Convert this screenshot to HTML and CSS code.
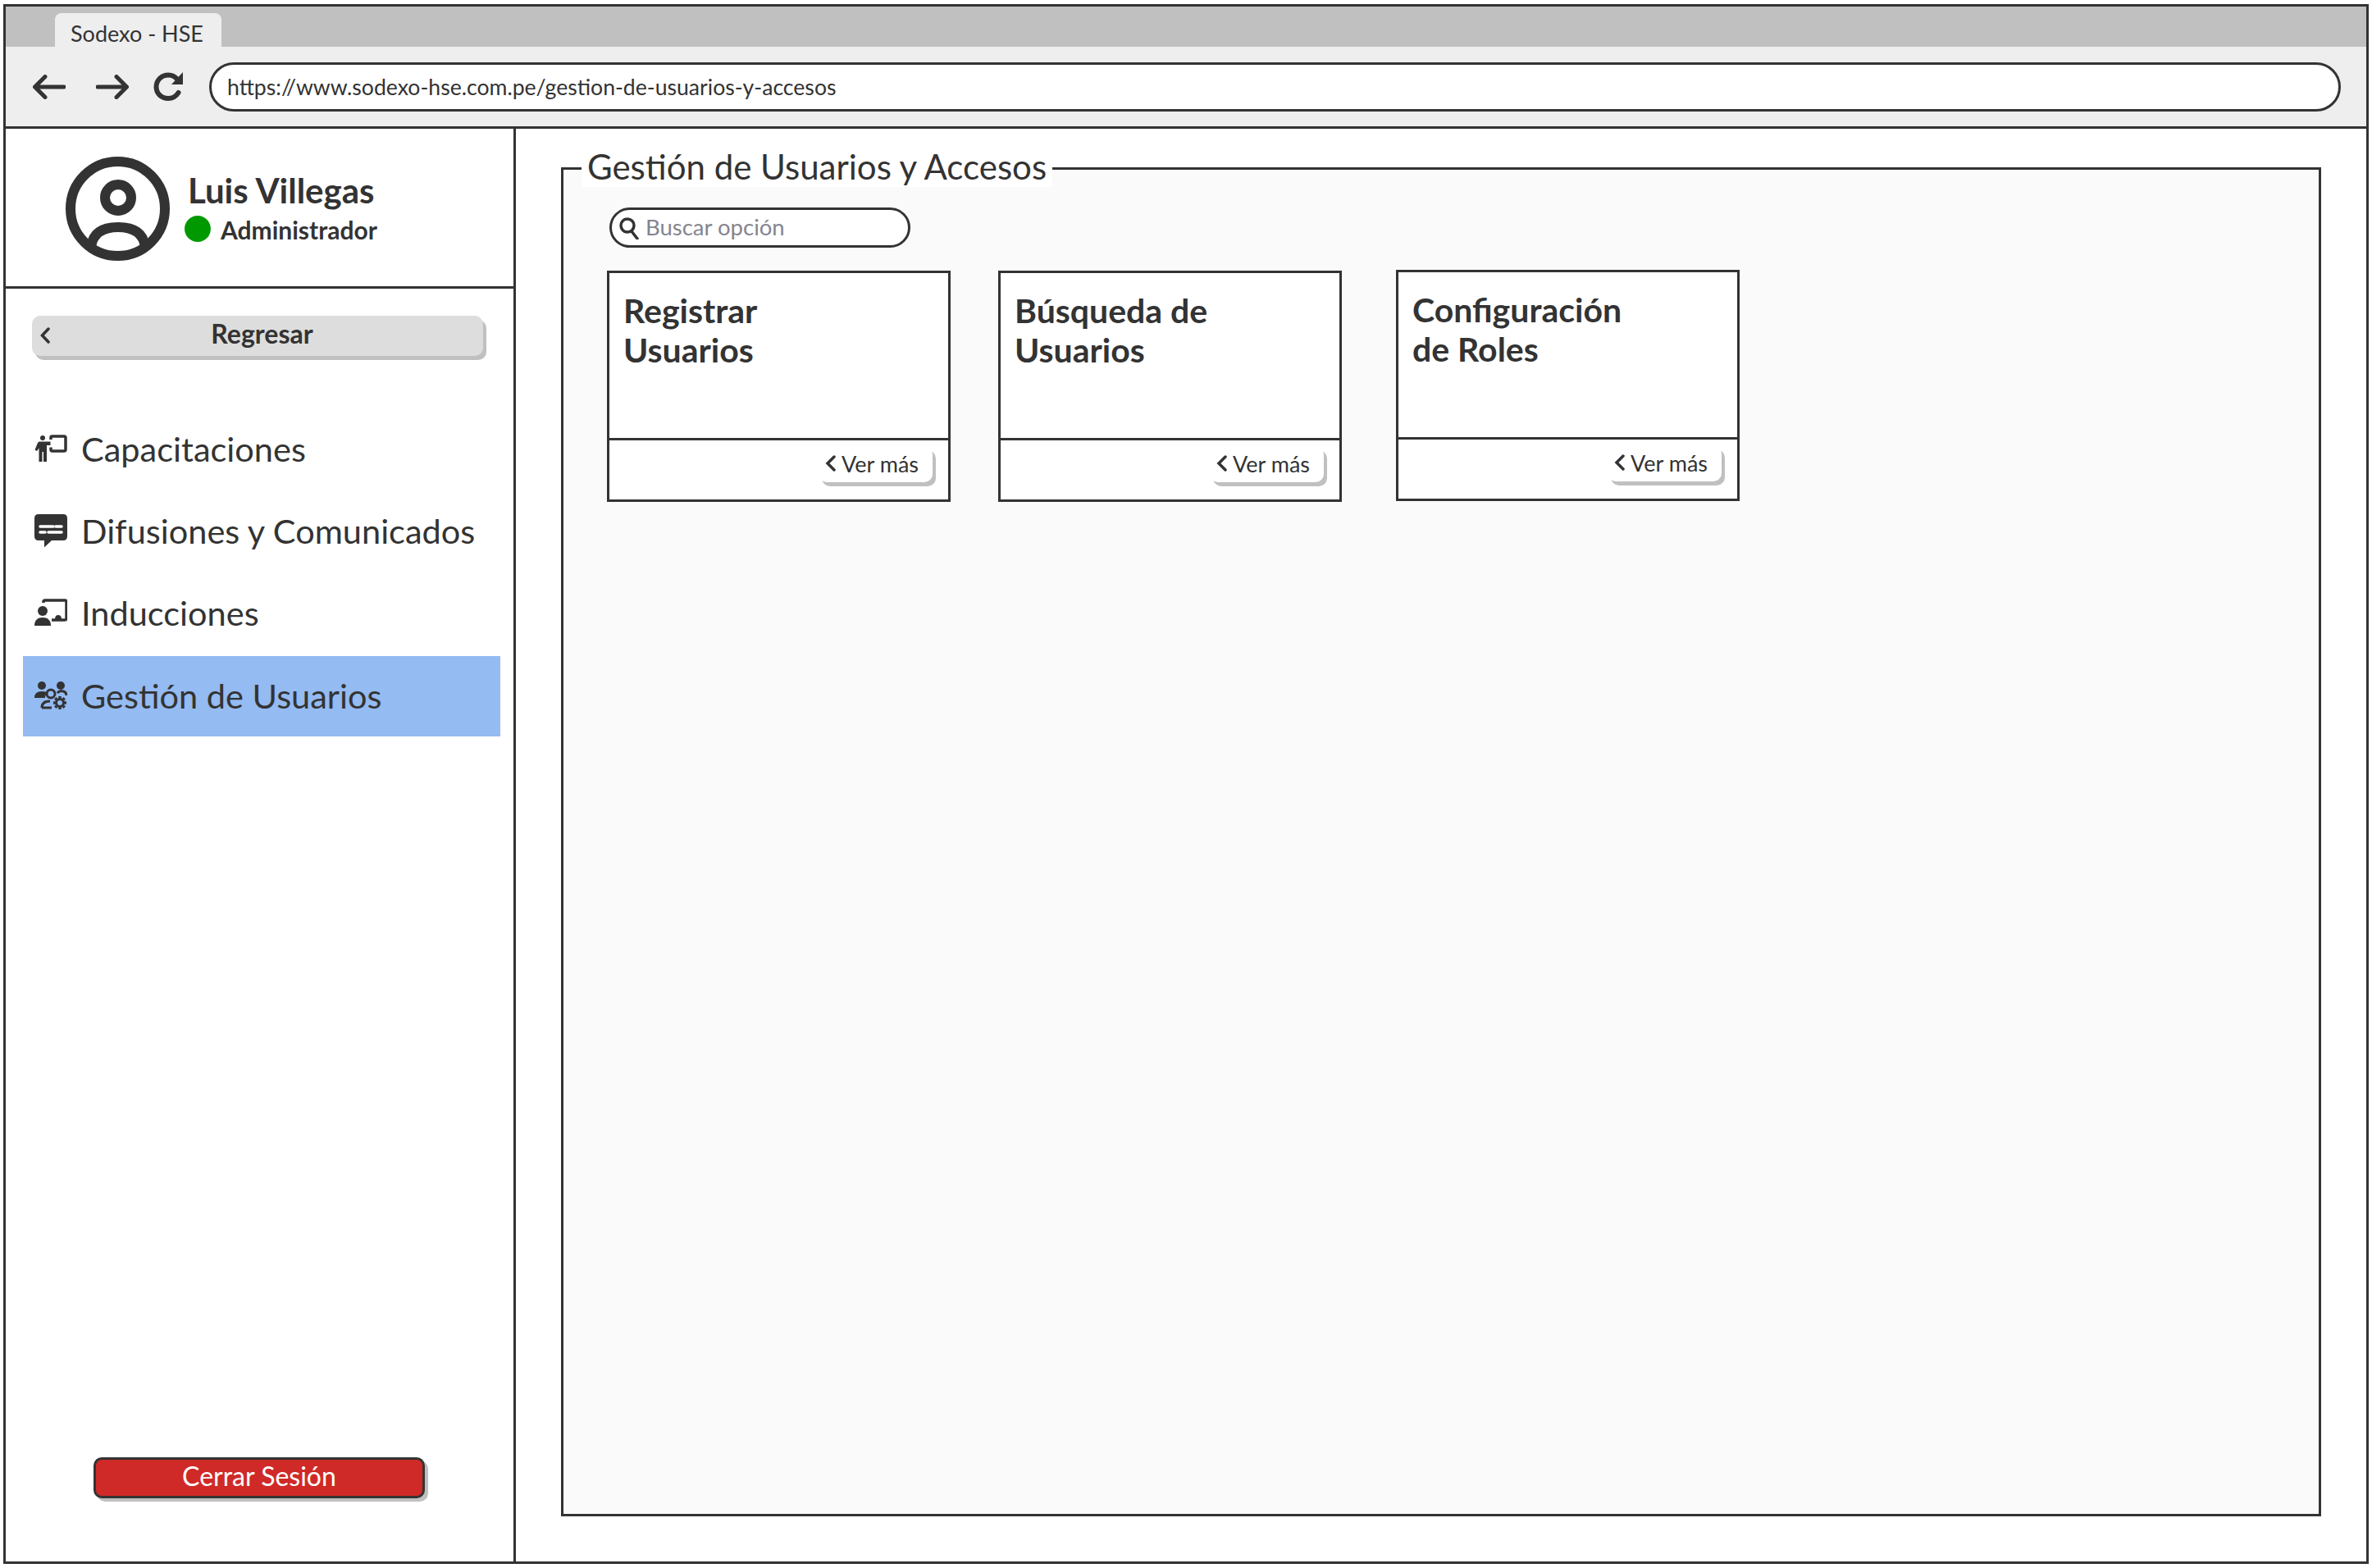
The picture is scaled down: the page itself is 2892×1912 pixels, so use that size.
FILE: index.html
```html
<!DOCTYPE html>
<html lang="es">
<head>
    <meta charset="UTF-8">
    <title>Sodexo - HSE</title>
    <link rel="stylesheet" href="styles.css">
</head>
<body>

<div class="window">
    <div class="tabbar">
        <div class="tab">Sodexo - HSE</div>
    </div>

    <div class="toolbar">
        <svg class="nav-icon" width="40" height="30" viewBox="0 0 40 30"><path d="M38 15H3M15 2.500L2.500 15 15 27.500"/></svg>
        <svg class="nav-icon" width="40" height="30" viewBox="0 0 40 30"><path d="M2 15H37M25 2.500L37.500 15 25 27.500"/></svg>
        <svg class="reload-icon" width="37" height="35" viewBox="0 0 37 35"><path class="reload-arc" d="M29 8.500C26 5 22.500 3.500 18.500 3.500 10 3.500 3.500 9.500 3.500 18 3.500 26 10 32 18 32 24 32 28 29 30.500 25"/><path class="reload-tip" d="M36 0V15H22Z"/></svg>
        <div class="url">https://www.sodexo-hse.com.pe/gestion-de-usuarios-y-accesos</div>
    </div>

    <div class="app">
        <aside class="sidebar">
            <div class="profile">
                <svg class="avatar" width="127" height="127" viewBox="0 0 127 127">
                    <circle cx="63.500" cy="63.500" r="57.500"/>
                    <circle cx="64" cy="50" r="16"/>
                    <path d="M31 110C33 94 44 86 64 86S95 94 97 110"/>
                </svg>
                <div class="profile-text">
                    <div class="profile-name">Luis Villegas</div>
                    <div class="profile-role"><span class="status-dot"></span>Administrador</div>
                </div>
            </div>

            <div class="back-btn">
                <svg class="back-chevron" width="12" height="20" viewBox="0 0 12 20"><path d="M10 2L2.500 10 10 18"/></svg>
                Regresar
            </div>

            <nav class="menu">
                <div class="menu-item">
                    <svg class="menu-icon" width="40" height="34" viewBox="0 0 40 34">
                        <circle cx="10" cy="4" r="3"/>
                        <path d="M6 8.500H19.500V13H15V33H11V21H9.500V33H5.500V16.500L3 20 .5 18.500 4 10Q4.800 8.500 6 8.500Z"/>
                        <path class="line" d="M20 6V3.500Q20 2 21.500 2H36Q38 2 38 4V18Q38 20 36 20H21.500Q20 20 20 18V15.500"/>
                    </svg>
                    Capacitaciones
                </div>
                <div class="menu-item">
                    <svg class="menu-icon" width="40" height="41" viewBox="0 0 40 41">
                        <path d="M5 0H35Q40 0 40 5V27Q40 32 35 32H21L12 40.500V32H5Q0 32 0 27V5Q0 0 5 0Z"/>
                        <path class="slot" d="M7 15H23M26 15H33M7 22H13M17 22H33"/>
                    </svg>
                    Difusiones y Comunicados
                </div>
                <div class="menu-item">
                    <svg class="menu-icon" width="40" height="34" viewBox="0 0 40 34">
                        <circle cx="10" cy="15" r="6"/>
                        <path d="M0 33C0 26 4 23 10 23S20 26 20 33Z"/>
                        <path class="line" d="M11 5V4Q11 2 13 2H37Q39 2 39 4V24Q39 26 37 26H21"/>
                        <path d="M25 25Q25 20 29 20T33 25Z"/>
                    </svg>
                    Inducciones
                </div>
                <div class="menu-item menu-item-active">
                    <svg class="menu-icon" width="40" height="34" viewBox="0 0 40 34">
                        <circle cx="9" cy="5" r="5"/>
                        <circle cx="32" cy="5" r="5"/>
                        <path d="M0 20Q0 12 9 12 14 12 16 14 13 16 13 20Z"/>
                        <circle class="ring" cx="20" cy="15" r="5"/>
                        <path class="ring" d="M9 32H21M9 32C9 26 13 24 19 24"/>
                        <path class="ring" d="M28 14Q30 11.500 33 11.500 39 12 39 17"/>
                        <circle class="ring" cx="31" cy="26" r="4.500"/>
                        <path class="gear" d="M31 18V20.500M31 31.500V34M23 26H25.500M36.500 26H39M25.300 20.300L27 22M35 30L36.700 31.700M25.300 31.700L27 30M35 22L36.700 20.300"/>
                    </svg>
                    Gestión de Usuarios
                </div>
            </nav>

            <div class="logout-btn">Cerrar Sesión</div>
        </aside>

        <main class="content">
            <section class="panel">
                <h1 class="panel-title">Gestión de Usuarios y Accesos</h1>

                <div class="search">
                    <svg class="search-icon" width="24" height="28" viewBox="0 0 24 28"><circle cx="10" cy="11" r="8"/><path d="M15 18L22 27"/></svg>
                    <span>Buscar opción</span>
                </div>

                <div class="cards">
                    <div class="card">
                        <div class="card-body">Registrar<br>Usuarios</div>
                        <div class="card-foot">
                            <div class="more-btn"><svg class="more-chevron" width="13" height="20" viewBox="0 0 13 20"><path d="M11 2L3 10 11 18"/></svg>Ver más</div>
                        </div>
                    </div>
                    <div class="card">
                        <div class="card-body">Búsqueda de<br>Usuarios</div>
                        <div class="card-foot">
                            <div class="more-btn"><svg class="more-chevron" width="13" height="20" viewBox="0 0 13 20"><path d="M11 2L3 10 11 18"/></svg>Ver más</div>
                        </div>
                    </div>
                    <div class="card card-roles">
                        <div class="card-body">Configuración<br>de Roles</div>
                        <div class="card-foot">
                            <div class="more-btn"><svg class="more-chevron" width="13" height="20" viewBox="0 0 13 20"><path d="M11 2L3 10 11 18"/></svg>Ver más</div>
                        </div>
                    </div>
                </div>
            </section>
        </main>
    </div>
</div>

</body>
</html>
```

FILE: styles.css
```css
* {
    box-sizing: border-box;
}
body {
    margin: 0;
    background: #fff;
    color: #333;
    font-family: Lato, "Open Sans", sans-serif;
}

/* browser frame */
.window {
    width: 2884px;
    height: 1902px;
    margin: 5px 4px;
    border: 3px solid #333;
    display: flex;
    flex-direction: column;
}
.tabbar {
    height: 49px;
    flex: none;
    padding: 8px 0 0 60px;
    background: #c0c0c0;
}
.tab {
    width: 203px;
    height: 41px;
    padding: 8px 0 0 19px;
    background: #eee;
    border-radius: 8px 8px 0 0;
    font-size: 27px;
    line-height: 34px;
    white-space: nowrap;
}
.toolbar {
    height: 100px;
    flex: none;
    display: flex;
    align-items: center;
    padding: 0 31px 0 33px;
    background: #eee;
    border-bottom: 3px solid #333;
}
.nav-icon {
    margin-right: 37px;
    fill: none;
    stroke: #333;
    stroke-width: 5;
    stroke-linecap: round;
    stroke-linejoin: round;
}
.reload-icon {
    margin: 0 31px 0 -7px;
}
.reload-arc {
    fill: none;
    stroke: #333;
    stroke-width: 6;
    stroke-linecap: round;
}
.reload-tip {
    fill: #333;
}
.url {
    flex: 1;
    height: 60px;
    padding-left: 19px;
    background: #fff;
    border: 3px solid #333;
    border-radius: 30px;
    font-size: 26.600px;
    line-height: 54px;
}
.app {
    flex: 1;
    display: flex;
    min-height: 0;
}

/* left column */
.sidebar {
    width: 622px;
    flex: none;
    display: flex;
    flex-direction: column;
    border-right: 3px solid #333;
}
.profile {
    height: 195px;
    flex: none;
    display: flex;
    align-items: flex-start;
    padding: 34px 0 0 73px;
    border-bottom: 3px solid #333;
}
.avatar {
    flex: none;
    fill: none;
    stroke: #333;
    stroke-width: 12;
}
.profile-text {
    margin-left: 22px;
}
.profile-name {
    padding: 17px 0 0 0;
    font-size: 42px;
    line-height: 48px;
    font-weight: 700;
}
.profile-role {
    display: flex;
    align-items: center;
    margin: 6px 0 0 -4px;
    font-size: 30px;
    line-height: 36px;
    font-weight: 700;
}
.status-dot {
    width: 32px;
    height: 32px;
    margin: -2px 12px 0 0;
    border-radius: 50%;
    background: #009900;
}
.back-btn {
    position: relative;
    width: 550px;
    height: 49px;
    flex: none;
    margin: 33px 0 0 32px;
    padding-left: 11px;
    background: #ddd;
    border-radius: 10px;
    box-shadow: 4px 5px 0 #c0c0c0;
    font-size: 32px;
    line-height: 44px;
    font-weight: 700;
    text-align: center;
}
.back-chevron {
    position: absolute;
    left: 10px;
    top: 14px;
    fill: none;
    stroke: #333;
    stroke-width: 3.500;
    stroke-linecap: round;
}
.menu {
    width: 582px;
    margin: 63px 0 0 21px;
}
.menu-item {
    height: 100px;
    display: flex;
    align-items: center;
    gap: 17px;
    padding-left: 14px;
    font-size: 41.500px;
}
.menu-item-active {
    height: 98px;
    margin-top: 3px;
    padding-bottom: 3px;
    background: #94bbf2;
}
.menu-icon {
    flex: none;
    width: 40px;
    fill: #333;
}
.menu-icon .line {
    fill: none;
    stroke: #333;
    stroke-width: 3.500;
}
.menu-icon .slot {
    fill: none;
    stroke: #fff;
    stroke-width: 3.500;
    stroke-linecap: round;
}
.menu-icon .ring {
    fill: none;
    stroke: #333;
    stroke-width: 3;
}
.menu-icon .gear {
    fill: none;
    stroke: #333;
    stroke-width: 3.500;
}
.logout-btn {
    width: 404px;
    height: 50px;
    flex: none;
    margin: auto 0 77px 107px;
    background: #cf2a27;
    border: 3px solid #333;
    border-radius: 10px;
    box-shadow: 4px 4px 0 #c0c0c0;
    color: #fff;
    font-size: 32px;
    line-height: 40px;
    text-align: center;
}

/* main panel */
.content {
    flex: 1;
    padding: 47px 55px 55px 55px;
}
.panel {
    position: relative;
    height: 100%;
    padding: 46px 0 0 56px;
    background: #fafafa;
    border: 3px solid #333;
}
.panel-title {
    position: absolute;
    left: 22px;
    top: -29px;
    margin: 0;
    padding: 0 7px;
    background: #fff;
    font-size: 42px;
    line-height: 50px;
    font-weight: 400;
}
.search {
    width: 367px;
    height: 49px;
    display: flex;
    align-items: center;
    padding-left: 9px;
    background: #fff;
    border: 3px solid #333;
    border-radius: 25px;
    color: #85858f;
    font-size: 27.500px;
}
.search span {
    margin: -3px 0 0 8px;
}
.search-icon {
    fill: none;
    stroke: #333;
    stroke-width: 3.500;
    stroke-linecap: round;
}
.cards {
    display: flex;
    align-items: flex-start;
    gap: 58px;
    margin: 28px 0 0 -3px;
}
.card {
    width: 419px;
    height: 282px;
    display: flex;
    flex-direction: column;
    background: #fff;
    border: 3px solid #333;
}
.card-roles {
    margin: -1px 0 0 8px;
}
.card-body {
    flex: 1;
    padding: 22px 0 0 17px;
    font-size: 41px;
    line-height: 48px;
    font-weight: 700;
    border-bottom: 3px solid #333;
}
.card-foot {
    height: 72px;
    flex: none;
    display: flex;
    justify-content: flex-end;
    padding: 7px 19px 0 0;
}
.more-btn {
    width: 139px;
    height: 44px;
    display: flex;
    align-items: center;
    padding: 0 0 2px 8px;
    gap: 7px;
    background: #fff;
    border-radius: 10px;
    box-shadow: 4px 5px 0 #c0c0c0;
    font-size: 27px;
}
.more-chevron {
    flex: none;
    fill: none;
    stroke: #333;
    stroke-width: 3.500;
    stroke-linecap: round;
}
```
